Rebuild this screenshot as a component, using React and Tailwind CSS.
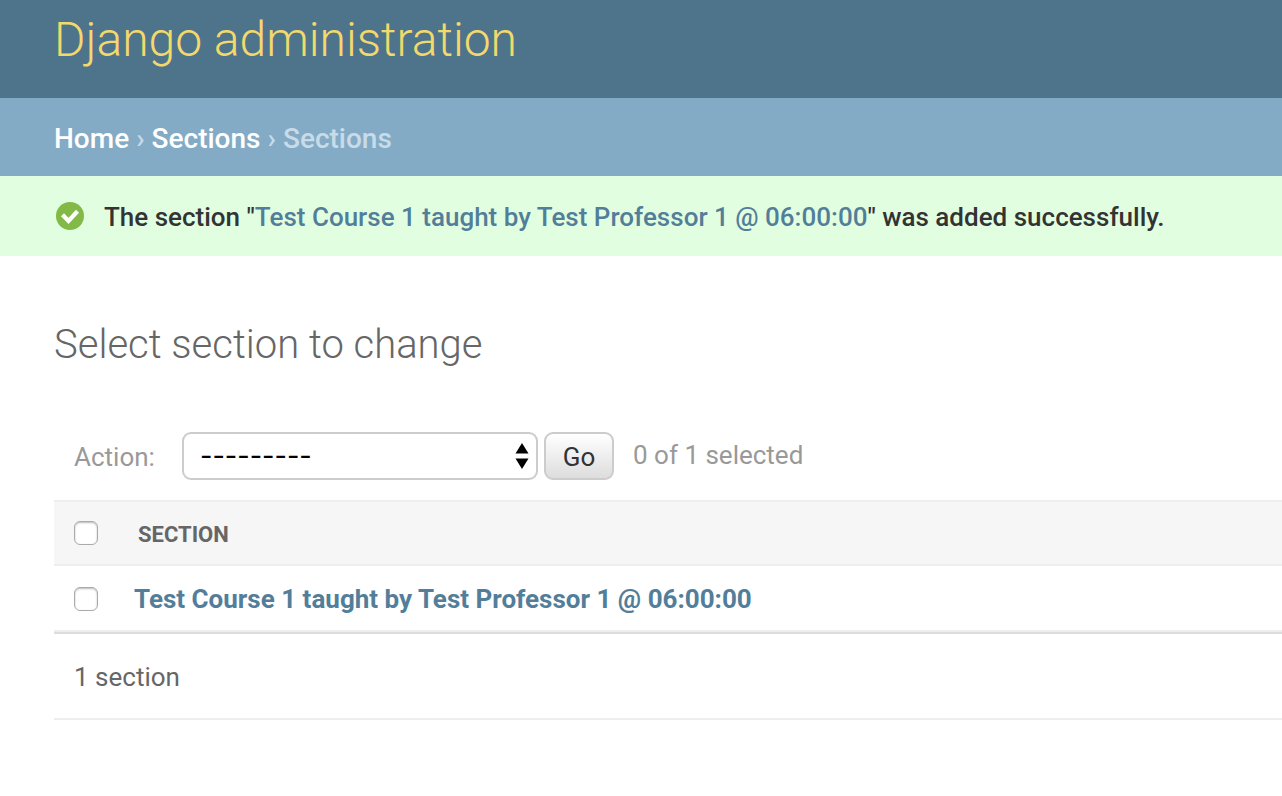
export default function App() {
  return (
    <div className="min-h-screen bg-white font-['Roboto',sans-serif] text-[26px] leading-8 text-[#333]">
      <header className="h-[98px] bg-[#4e748c] px-[54px] pt-[9px]">
        <h1 className="text-[48px] leading-[62px] font-light text-[#f3d96c]">Django administration</h1>
      </header>
      <nav aria-label="Breadcrumb" className="flex h-[78px] items-center gap-[7px] bg-[#83abc5] px-[54px] pt-1 text-[28px] text-[#c8dbe8]">
        <a href="#home" className="font-medium text-white">Home</a>
        <span className="font-medium">›</span>
        <a href="#sections" className="font-medium text-white">Sections</a>
        <span className="font-medium">›</span>
        <span className="font-medium">Sections</span>
      </nav>
      <div role="status" className="flex h-20 items-center gap-5 bg-[#e2fee0] px-[56px]">
        <svg aria-hidden="true" className="size-7 shrink-0" viewBox="0 0 28 28">
          <circle cx="14" cy="14" r="14" fill="#83b947" />
          <path d="M6.5 12.7l6 6.2L21.5 9.2" fill="none" stroke="#fff" strokeWidth="4.2" />
        </svg>
        <p className="pt-[2px] font-medium">
          The section "<a href="#course" className="text-[#527e9a]">Test Course 1 taught by Test Professor 1 @ 06:00:00</a>" was added successfully.
        </p>
      </div>
      <main className="pl-[54px] pt-[63px]">
        <h2 className="text-[40px] leading-[52px] font-light text-[#666]">Select section to change</h2>
        <form className="mt-[61px] flex h-12 items-center pl-5 text-[#999]">
          <label htmlFor="action" className="mr-[27px] w-[81px] pt-[2px]">Action:</label>
          <div className="relative">
            <select id="action" className="block h-12 w-[356px] appearance-none rounded-[9px] border-2 border-[#ccc] bg-white pl-4 font-['Inter',sans-serif] text-[27px] text-black">
              <option>---------</option>
            </select>
            <svg aria-hidden="true" className="pointer-events-none absolute top-[11px] right-[9px] h-[26px] w-[14px]" viewBox="0 0 14 26">
              <path d="M7 0l6.5 10.5H.5zM7 26l6.5-10.5H.5z" />
            </svg>
          </div>
          <button type="button" className="ml-[6px] h-12 w-[70px] rounded-[9px] border-2 border-[#ccc] bg-linear-to-b from-white to-[#ddd] pt-[2px] text-[#333]">Go</button>
          <span className="ml-[19px] pb-[2px]">0 of 1 selected</span>
        </form>
        <table className="mt-5 w-full border-collapse text-left">
          <thead>
            <tr className="h-16 border-y-2 border-[#eee] bg-[#f6f6f6]">
              <th className="w-20 pl-5"><input type="checkbox" aria-label="Select all" className="block size-6 appearance-none rounded-[6px] border border-[#aaa] bg-white shadow-[inset_0_1px_2px_#bbb]" /></th>
              <th className="pt-1 pl-1 text-[22px] font-bold text-[#666]">SECTION</th>
            </tr>
          </thead>
          <tbody>
            <tr className="h-[66px] border-b-2 border-[#eee]">
              <td className="pt-[2px] pl-5"><input type="checkbox" aria-label="Select section" className="block size-6 appearance-none rounded-[6px] border border-[#aaa] bg-white shadow-[inset_0_1px_2px_#bbb]" /></td>
              <th className="pt-[2px] font-bold text-[#527e9a]"><a href="#course">Test Course 1 taught by Test Professor 1 @ 06:00:00</a></th>
            </tr>
          </tbody>
        </table>
        <p className="flex h-[88px] items-center border-y-2 border-t-[#ddd] border-b-[#eee] pt-[2px] pl-5 text-[#666]">1 section</p>
      </main>
    </div>
  );
}
